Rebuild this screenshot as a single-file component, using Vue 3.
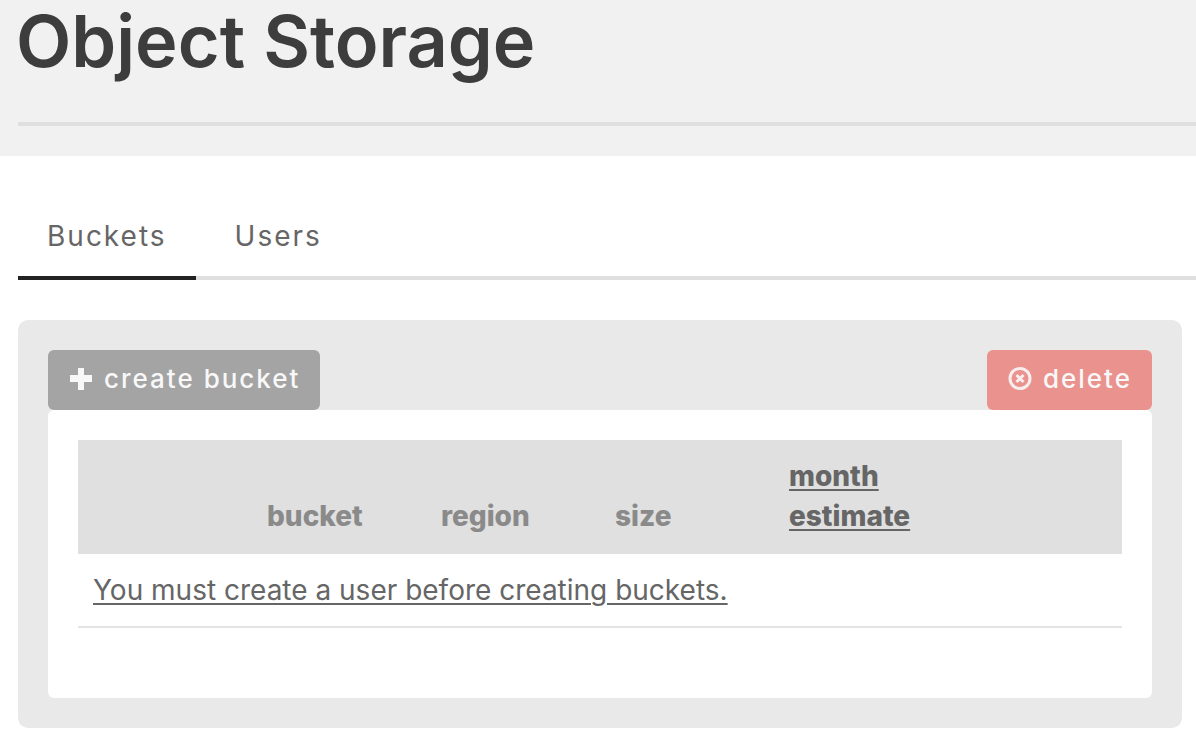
<script setup>
import { ref } from 'vue'

const tabs = ['Buckets', 'Users']
const active = ref('Buckets')
</script>

<template>
  <main class="page">
    <header class="masthead">
      <h1 class="title">Object Storage</h1>
    </header>

    <nav class="tabs">
      <a
        v-for="tab in tabs"
        :key="tab"
        href="#"
        class="tab"
        :class="{ active: tab === active }"
        @click.prevent="active = tab"
      >{{ tab }}</a>
    </nav>

    <section class="panel">
      <div class="toolbar">
        <button type="button" class="btn create">
          <svg class="icon" viewBox="0 0 24 24" aria-hidden="true">
            <path class="shade" d="M9 2h6v7h8v6h-8v8H9v-8H1V9h8z" />
            <path class="plus" d="M9 1h6v7h8v7h-8v8H9v-8H1V8h8z" />
          </svg>
          <span>create bucket</span>
        </button>
        <button type="button" class="btn delete">
          <svg class="icon ring" viewBox="0 0 24 24" aria-hidden="true">
            <circle cx="12" cy="11.5" r="10" />
            <path d="M8.5 8l7 7M15.5 8l-7 7" />
          </svg>
          <span>delete</span>
        </button>
      </div>

      <div class="card">
        <table class="table">
          <thead>
            <tr>
              <td></td>
              <th scope="col">bucket</th>
              <th scope="col">region</th>
              <th scope="col">size</th>
              <th scope="col"><a href="#">month estimate</a></th>
              <td></td>
            </tr>
          </thead>
          <tbody>
            <tr>
              <td colspan="6"><a href="#">You must create a user before creating buckets.</a></td>
            </tr>
          </tbody>
        </table>
      </div>
    </section>
  </main>
</template>

<style>
body {
  background: #fff;
}
</style>

<style scoped>
.page {
  font-family: Inter, "Liberation Sans", sans-serif;
  font-size: 28px;
  line-height: 40px;
  color: #666;
}

.masthead {
  background: #f1f1f1;
  padding: 0 0 30px 16px;
}

.title {
  margin: 0;
  padding-bottom: 40px;
  font-size: 72px;
  font-weight: 600;
  line-height: 82px;
  color: #3d3d3d;
}

.masthead::after {
  content: "";
  display: block;
  height: 4px;
  margin-left: 2px;
  background: #dfdfdf;
}

.tabs {
  display: flex;
  gap: 10px;
  margin: 40px 0 40px 18px;
  box-shadow: inset 0 -4px #dfdfdf;
}

.tab {
  padding: 20px 29px;
  border-bottom: 4px solid transparent;
  color: #666;
  letter-spacing: 2px;
  text-decoration: none;
}

.tab.active {
  border-bottom-color: #222;
}

.panel {
  margin: 0 14px 22px 18px;
  padding: 30px;
  border-radius: 10px;
  background: #e9e9e9;
}

.toolbar {
  display: flex;
  justify-content: space-between;
}

.btn {
  display: flex;
  align-items: center;
  gap: 11px;
  height: 60px;
  padding: 0 20px 2px 21px;
  border: 0;
  border-radius: 6px;
  font: inherit;
  font-size: 26px;
  font-weight: 500;
  letter-spacing: 2px;
  color: #f8f8f8;
}

.create {
  background: #a4a4a4;
}

.delete {
  background: #ea928e;
}

.icon {
  width: 24px;
  height: 24px;
}

.plus {
  fill: #f8f8f8;
}

.shade {
  fill: #8e8e8e;
}

.ring {
  fill: none;
  stroke: #f8eeee;
  stroke-width: 3;
}

.card {
  padding: 30px 30px 70px;
  border-radius: 6px;
  background: #fff;
}

.table {
  width: 100%;
  border-collapse: separate;
  border-spacing: 0;
  table-layout: fixed;
}

.table th,
.table td {
  padding: 16px 15px;
  border-bottom: 2px solid #e4e4e4;
  text-align: left;
  vertical-align: bottom;
}

.table thead th,
.table thead td {
  border-bottom-color: #e0e0e0;
  background: #e0e0e0;
  color: #8a8a8a;
  font-weight: 800;
}

.table a {
  color: #666;
  text-decoration-thickness: 2px;
  text-underline-offset: 3px;
}
</style>
